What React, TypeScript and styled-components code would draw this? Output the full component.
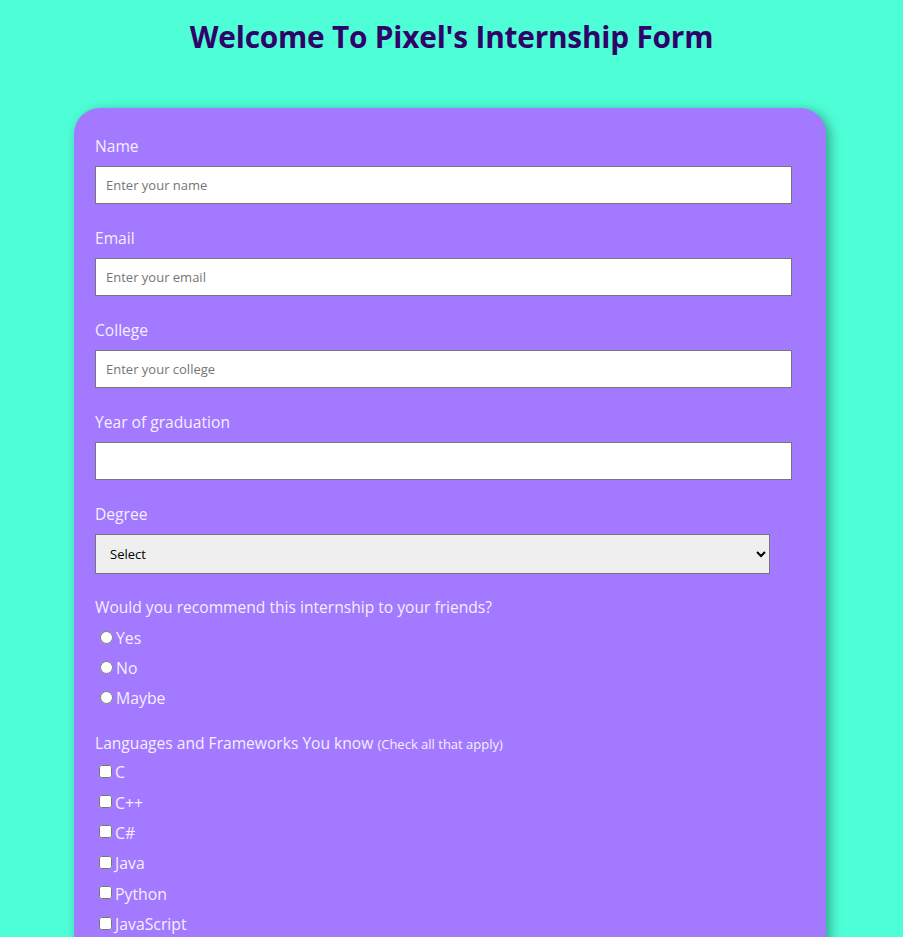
import React from "react";
import styled, { createGlobalStyle } from "styled-components";

const Global = createGlobalStyle`
  html, body { margin: 0; padding: 0; }
  body {
    background: #4efed6;
    font-family: "Open Sans", "Noto Sans", sans-serif;
    overflow: hidden;
  }
`;

const Page = styled.div`
  display: flex;
  flex-direction: column;
  align-items: center;
  padding-top: 17px;
`;

const Title = styled.h1`
  margin: 0;
  font-size: 29.8px;
  line-height: 40px;
  font-weight: 700;
  color: #2f0468;
  letter-spacing: -0.2px;
`;

const Card = styled.form`
  box-sizing: border-box;
  width: 752px;
  margin-top: 51px;
  margin-left: -3px;
  padding: 28px 21px 40px;
  background: #a379ff;
  border-radius: 26px;
  box-shadow: 4px 3px 12px rgba(0, 0, 0, 0.35);
`;

const Field = styled.div<{ $gap?: number }>`
  display: flex;
  flex-direction: column;
  align-items: flex-start;
  margin-bottom: ${(p) => p.$gap ?? 24}px;
`;

const Label = styled.label<{ $mb?: number }>`
  display: block;
  font-size: 15.6px;
  line-height: 20px;
  color: #f4efff;
  margin-bottom: ${(p) => p.$mb ?? 10}px;
`;

const Small = styled.span`
  font-size: 13px;
`;

const TextInput = styled.input`
  box-sizing: border-box;
  width: 697px;
  height: 38px;
  padding: 0 10px;
  border: 1px solid #767676;
  background: #fff;
  font-family: "Open Sans", "Noto Sans", sans-serif;
  font-size: 13px;
  color: #333;
  outline: none;
  &::placeholder { color: #757575; }
`;

const Select = styled.select`
  box-sizing: border-box;
  width: 675px;
  height: 40px;
  padding: 0 10px;
  border: 1px solid #767676;
  border-radius: 0;
  background: #efefef;
  font-family: "Open Sans", "Noto Sans", sans-serif;
  font-size: 13px;
  color: #000;
`;

const Option = styled.label<{ $h?: number }>`
  display: flex;
  align-items: center;
  height: ${(p) => p.$h ?? 30}px;
  font-size: 15.8px;
  color: #f4efff;
`;

const Radio = styled.input`
  width: 13px;
  height: 13px;
  margin: 0 3px 2px 5px;
`;

const Check = styled.input`
  width: 13px;
  height: 13px;
  margin: 0 3px 2px 4px;
`;

const langs = ["C", "C++", "C#", "Java", "Python", "JavaScript"];

export default function App() {
  return (
    <>
      <Global />
      <Page>
        <Title>Welcome To Pixel's Internship Form</Title>
        <Card>
          <Field>
            <Label>Name</Label>
            <TextInput placeholder="Enter your name" />
          </Field>
          <Field>
            <Label>Email</Label>
            <TextInput placeholder="Enter your email" />
          </Field>
          <Field>
            <Label>College</Label>
            <TextInput placeholder="Enter your college" />
          </Field>
          <Field>
            <Label>Year of graduation</Label>
            <TextInput />
          </Field>
          <Field $gap={23}>
            <Label>Degree</Label>
            <Select defaultValue="">
              <option value="">Select</option>
              <option>B.Tech</option>
              <option>M.Tech</option>
            </Select>
          </Field>
          <Field $gap={20}>
            <Label $mb={6}>Would you recommend this internship to your friends?</Label>
            {["Yes", "No", "Maybe"].map((v) => (
              <Option key={v}>
                <Radio type="radio" name="rec" />
                {v}
              </Option>
            ))}
          </Field>
          <Field $gap={0}>
            <Label $mb={3}>
              Languages and Frameworks You know <Small>(Check all that apply)</Small>
            </Label>
            {langs.map((v) => (
              <Option key={v} $h={30.4}>
                <Check type="checkbox" />
                {v}
              </Option>
            ))}
          </Field>
        </Card>
      </Page>
    </>
  );
}
